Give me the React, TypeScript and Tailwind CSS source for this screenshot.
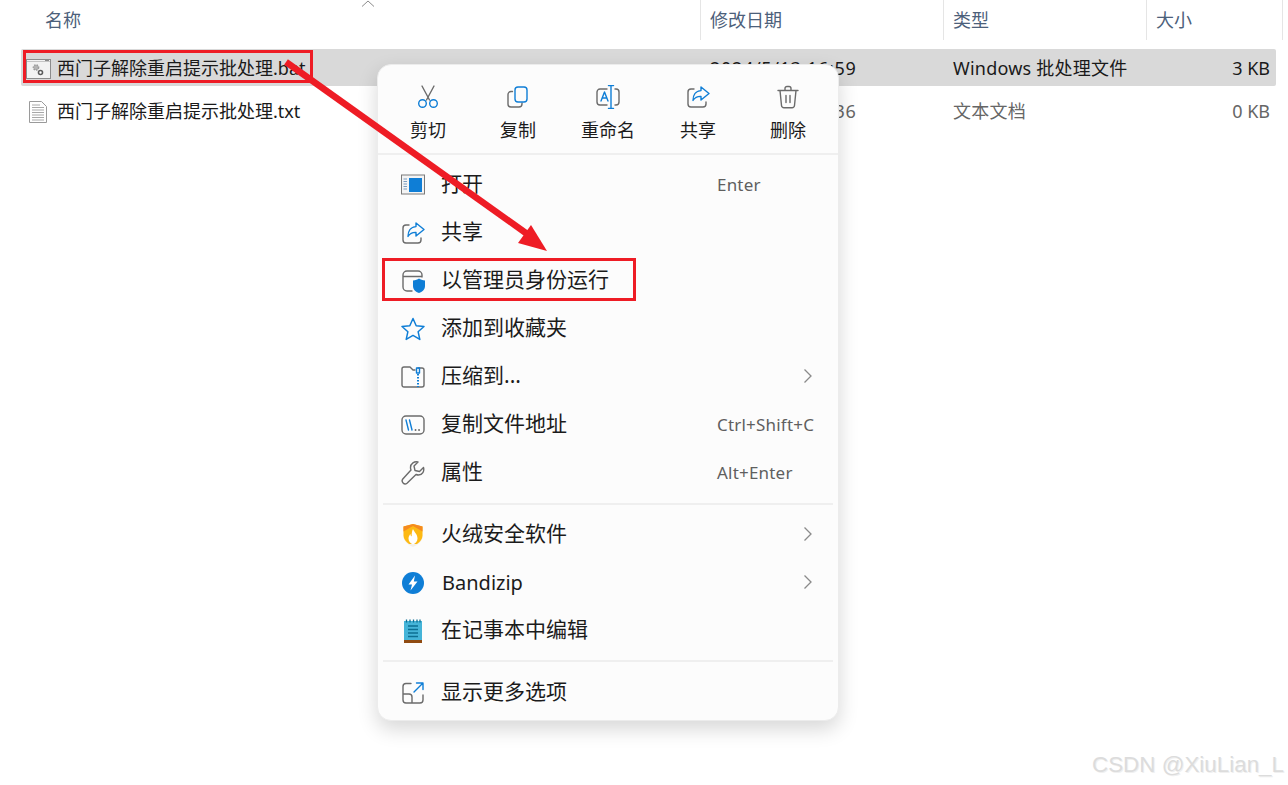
const font = { fontFamily: '"Noto Sans", "Noto Sans CJK SC", sans-serif' };

const GRAY = "#6b6b6b";
const BLUE = "#0f7ed6";

function Svg({ children, size = 24 }: { children: React.ReactNode; size?: number }) {
  return (
    <svg width={size} height={size} viewBox="0 0 24 24" fill="none" strokeWidth="1.4" strokeLinecap="round" strokeLinejoin="round">
      {children}
    </svg>
  );
}

const ScissorsIcon = () => (
  <Svg>
    <path d="M6 1l7.500 14M18 1l-7.500 14" stroke={GRAY} />
    <circle cx="6.500" cy="18.500" r="3.800" stroke={BLUE} />
    <circle cx="17.500" cy="18.500" r="3.800" stroke={BLUE} />
  </Svg>
);
const CopyIcon = () => (
  <Svg>
    <path d="M6.500 6.500H5a3 3 0 0 0-3 3V19a3 3 0 0 0 3 3h8a3 3 0 0 0 3-3v-1" stroke={GRAY} />
    <rect x="9" y="2" width="12" height="15" rx="3" stroke={BLUE} />
  </Svg>
);
const RenameIcon = () => (
  <Svg>
    <path d="M11 4H4a3 3 0 0 0-3 3v10a3 3 0 0 0 3 3h7M19 4h1a3 3 0 0 1 3 3v10a3 3 0 0 1-3 3h-1" stroke={GRAY} />
    <path d="M15 0.500v23M12.500 0.500h5M12.500 23.500h5M5 16l3.500-9L12 16M6.200 13h4.600" stroke={BLUE} />
  </Svg>
);
const ShareIcon = () => (
  <Svg>
    <path d="M8 4H5a3 3 0 0 0-3 3v12a3 3 0 0 0 3 3h12a3 3 0 0 0 3-3v-2" stroke={GRAY} />
    <path d="M15 2l8 6.500-8 6.500v-3.600c-3.500-.2-6 1-8 4 0-5 2.500-9.400 8-9.800z" stroke={BLUE} />
  </Svg>
);
const TrashIcon = () => (
  <Svg>
    <path d="M2 5.500h20M9 5V3.500A2 2 0 0 1 11 1.500h2a2 2 0 0 1 2 2V5M4 5.500l1.500 15a2.500 2.500 0 0 0 2.500 2.200h8a2.500 2.500 0 0 0 2.500-2.200L20 5.500M10 10.500v7M14 10.500v7" stroke={GRAY} />
  </Svg>
);
const OpenIcon = () => (
  <Svg>
    <rect x="0.500" y="2" width="23" height="19" fill="#f4f4f4" stroke="#7a7a7a" strokeWidth="1" strokeLinejoin="miter" />
    <rect x="8" y="5" width="13" height="14" fill={BLUE} stroke="none" />
    <path d="M2.500 6h3.500M2.500 8.500h3.500M2.500 11h3.500M2.500 13.500h3.500M2.500 16h3.500" stroke="#7a9cc0" strokeWidth="1" strokeLinecap="butt" />
  </Svg>
);
const AdminIcon = () => (
  <Svg>
    <path d="M11 22H6a4 4 0 0 1-4-4V6a4 4 0 0 1 4-4h11a4 4 0 0 1 4 4v2M2 7.500h19" stroke={GRAY} />
    <path d="M18 9.500c1.500 1.200 3.500 1.800 6 1.900v5.600c0 3.700-2.700 5.800-6 7-3.300-1.200-6-3.300-6-7v-5.600c2.500-.1 4.500-.7 6-1.900z" fill={BLUE} stroke="none" />
  </Svg>
);
const StarIcon = () => (
  <Svg>
    <path d="M12 1.500l3.200 7.200 7.800.8-5.900 5.200 1.700 7.700L12 18.400l-6.800 4 1.700-7.700L1 9.500l7.800-.8z" stroke={BLUE} strokeWidth="1.500" />
  </Svg>
);
const ZipIcon = () => (
  <Svg>
    <path d="M17 3h4a2 2 0 0 1 2 2v15a2 2 0 0 1-2 2H3a2 2 0 0 1-2-2V4a2 2 0 0 1 2-2h6l3 3h2" stroke={GRAY} />
    <path d="M17 9v13" stroke={BLUE} strokeWidth="2" strokeDasharray="1.500 1.500" strokeLinecap="butt" />
    <rect x="15.500" y="3" width="3" height="5" stroke={BLUE} strokeWidth="1.400" />
  </Svg>
);
const PathIcon = () => (
  <Svg>
    <rect x="1" y="3" width="22" height="18" rx="4" stroke={GRAY} />
    <path d="M5 7l2.500 10M8.500 7L11 17" stroke={BLUE} />
    <path d="M14.500 17h.1M18 17h.1" stroke={GRAY} strokeWidth="1.800" />
  </Svg>
);
const WrenchIcon = () => (
  <Svg>
    <path d="M22.500 6.500l-4 4-4.500-1-1-4.500 4-4c-3.500-1-7.500 1.500-7.500 5.500 0 1 .2 1.800.5 2.500L1.800 18a3 3 0 0 0 4.200 4.200L15 13.500c.8.300 1.500.5 2.500.5 4 0 6-4 5-7.500z" stroke={GRAY} />
  </Svg>
);
const HuorongIcon = () => (
  <Svg>
    <path d="M12 1l9.500 2.500v10c0 4.500-4 8-9.500 10.500C6.500 21.500 2.500 18 2.500 13.500v-10z" fill="#f4f0e8" />
    <path d="M12 1l9.500 2.500v9c0 3.500-2.500 6.500-5.500 8.500H8c-3-2-5.500-5-5.500-8.500v-9z" fill="#fdb913" />
    <path d="M12 1l9.500 2.500v5L12 3 2.500 8.500v-5z" fill="#f58a1f" />
    <path d="M12 6c1 3 4.500 5 4.500 9.500 0 3-2 5-4.500 6-2.500-1-4.500-3-4.500-6 0-2 1-3.500 2-4.500 0 1.500.5 2 1.200 2.500C10.500 10.500 11 8 12 6z" fill="#fff" />
  </Svg>
);
const BandizipIcon = () => (
  <Svg>
    <circle cx="12" cy="12" r="11" fill="#0f7ed6" />
    <path d="M14 4.500L7.500 13.500h3.500L9.500 19.500 16.500 10.500h-3.700z" fill="#fff" />
  </Svg>
);
const NotepadIcon = () => (
  <Svg>
    <rect x="3" y="2" width="18" height="20" fill="#45b4d8" />
    <rect x="3" y="21" width="18" height="3" fill="#8f4b12" />
    <path d="M5.500 0.500v3M9 0.500v3M12.500 0.500v3M16 0.500v3M19 0.500v3" stroke="#0d6f93" strokeWidth="1.300" strokeLinecap="butt" />
    <path d="M7 7h10M7 10.500h10M7 14h10M7 17.500h10" stroke="#0d6f93" strokeWidth="1.500" strokeLinecap="butt" />
  </Svg>
);
const MoreIcon = () => (
  <Svg>
    <path d="M10 2.500H5a3 3 0 0 0-3 3V19a3 3 0 0 0 3 3h14a3 3 0 0 0 3-3v-5M2 13h6a3 3 0 0 1 3 3v6" stroke={GRAY} />
    <path d="M13 11l9-9M15.500 2H22v6.500" stroke={BLUE} />
  </Svg>
);
const Chevron = () => (
  <svg width="10" height="16" viewBox="0 0 10 16" fill="none" stroke="#8a8a8a" strokeWidth="1.300">
    <path d="M1.500 1.500L8 8l-6.500 6.500" />
  </svg>
);

const BatIcon = () => (
  <svg width="25" height="20" viewBox="0 0 25 20" fill="none">
    <rect x="0.500" y="0.500" width="24" height="19" fill="#f2f2f2" stroke="#8c8c8c" />
    <path d="M1 2.500h23" stroke="#c4c4c4" />
    <path d="M19 1.500h4" stroke="#8a8a8a" />
    <circle cx="10" cy="8.500" r="2.600" fill="#b4b4b4" stroke="#9a9a9a" strokeWidth="1.500" strokeDasharray="1.500 1" />
    <circle cx="14.500" cy="13.500" r="2" fill="#fff" stroke="#5c5c5c" strokeWidth="1.600" />
  </svg>
);
const TxtIcon = () => (
  <svg width="18" height="22" viewBox="0 0 18 22" fill="none">
    <path d="M0.500 0.500h12l5 5v16H0.500z" fill="#fff" stroke="#9a9a9a" />
    <path d="M3 4h8M3 6.500h12M3 9h12M3 11.500h12M3 14h12M3 16.500h12M3 19h12" stroke="#a8a8a8" />
  </svg>
);

const actions = [
  { label: "剪切", icon: <ScissorsIcon /> },
  { label: "复制", icon: <CopyIcon /> },
  { label: "重命名", icon: <RenameIcon /> },
  { label: "共享", icon: <ShareIcon /> },
  { label: "删除", icon: <TrashIcon /> },
];

function MenuRow({ icon, label, hint, arrow, latin }: { icon: React.ReactNode; label: string; hint?: string; arrow?: boolean; latin?: boolean }) {
  return (
    <div className="flex h-12 items-center pl-[18px]">
      <span className="flex w-6 justify-center">{icon}</span>
      <span className={`ml-[16px] leading-none text-[#1b1b1b] ${latin ? "ml-[17px] text-[20px]" : "pb-[3px] text-[21px]"}`}>{label}</span>
      {hint && <span className="ml-auto w-[116px] text-[17px] tracking-[0.2px] text-[#5f5f5f]">{hint}</span>}
      {arrow && (
        <span className="ml-auto mr-5 -translate-y-px">
          <Chevron />
        </span>
      )}
    </div>
  );
}

function Divider() {
  return <div className="h-[2px] bg-[#efefef]" />;
}

function FileRow({ icon, name, date, type, size, selected }: { icon: React.ReactNode; name: string; date: string; type: string; size: string; selected?: boolean }) {
  const muted = selected ? "text-[#1a1a1a]" : "text-[#666]";
  return (
    <div className={`ml-[21px] mr-3 grid h-[37px] grid-cols-[679px_243px_203px_130px] items-center rounded-[2px] pt-0.5 text-[18px] ${selected ? "bg-[#d9d9d9]" : ""}`}>
      <div className="flex items-center text-[#1a1a1a]">
        <span className="flex w-9 justify-center pl-0.5 pr-1">{icon}</span>
        <span>{name}</span>
      </div>
      <div className={`pl-2.5 tracking-[0.68px] ${muted}`}>{date}</div>
      <div className={`pl-2.5 tracking-[0.22px] ${muted}`}>{type}</div>
      <div className={`pr-1.5 text-right ${muted}`}>{size}</div>
    </div>
  );
}

export default function App() {
  return (
    <div className="relative h-[785px] w-[1288px] overflow-hidden bg-white" style={font}>
      {/* Column headers */}
      <div className="grid h-10 grid-cols-[700px_243px_203px_137px] text-[18px] text-[#4c607a]">
        <div className="relative pl-[45px] pt-[7px]">
          名称
          <svg className="absolute left-[361px] top-0" width="14" height="8" viewBox="0 0 14 8" fill="none" stroke="#8c8c8c">
            <path d="M1 6.500L7 1l6 5.500" />
          </svg>
        </div>
        <div className="border-l border-[#e5e5e5] pl-[9px] pt-[7px]">修改日期</div>
        <div className="border-l border-[#e5e5e5] pl-[9px] pt-[7px]">类型</div>
        <div className="border-x border-[#e5e5e5] pl-[9px] pt-[7px]">大小</div>
      </div>

      {/* File list */}
      <div className="mt-[9px] flex flex-col gap-[6px]">
        <FileRow selected icon={<BatIcon />} name="西门子解除重启提示批处理.bat" date="2024/5/13 16:59" type="Windows 批处理文件" size="3 KB" />
        <FileRow icon={<TxtIcon />} name="西门子解除重启提示批处理.txt" date="2024/5/13 16:36" type="文本文档" size="0 KB" />
      </div>

      {/* Context menu */}
      <div className="absolute left-[377px] top-[64px] w-[462px] rounded-[14px] border border-[#ececec] bg-[#fcfcfc] shadow-[0_8px_20px_rgba(0,0,0,0.16)]">
        <div className="flex h-[88px] items-start px-[5px] pt-5">
          {actions.map((a) => (
            <div key={a.label} className="flex w-[90px] flex-col items-center">
              <span className="h-6">{a.icon}</span>
              <span className="mt-2.5 text-[18px] leading-[22px] text-[#1b1b1b]">{a.label}</span>
            </div>
          ))}
        </div>
        <Divider />
        <div className="px-[5px] pt-[6px]">
          <MenuRow icon={<OpenIcon />} label="打开" hint="Enter" />
          <MenuRow icon={<ShareIcon />} label="共享" />
          <MenuRow icon={<AdminIcon />} label="以管理员身份运行" />
          <MenuRow icon={<StarIcon />} label="添加到收藏夹" />
          <MenuRow icon={<ZipIcon />} label="压缩到..." arrow />
          <MenuRow icon={<PathIcon />} label="复制文件地址" hint="Ctrl+Shift+C" />
          <MenuRow icon={<WrenchIcon />} label="属性" hint="Alt+Enter" />
          <div className="mt-1.5"><Divider /></div>
          <div className="mt-1.5">
            <MenuRow icon={<HuorongIcon />} label="火绒安全软件" arrow />
            <MenuRow icon={<BandizipIcon />} label="Bandizip" arrow latin />
            <MenuRow icon={<NotepadIcon />} label="在记事本中编辑" />
          </div>
          <div className="mt-[5px]"><Divider /></div>
          <div className="mt-[7px] pb-[3px]">
            <MenuRow icon={<MoreIcon />} label="显示更多选项" />
          </div>
        </div>
      </div>

      {/* Red annotations */}
      <div className="absolute left-[23px] top-[50px] h-[33px] w-[290px] border-[3px] border-[#ee1c25]" />
      <div className="absolute left-[382px] top-[258px] h-[43px] w-[254px] border-[3px] border-[#ee1c25]" />
      <svg className="absolute left-0 top-0" width="1288" height="785" fill="none">
        <path d="M286 62L530 236" stroke="#ee1c25" strokeWidth="6.500" />
        <path d="M547 251L531 225L518 243Z" fill="#ee1c25" />
      </svg>

      {/* Watermark */}
      <div className="absolute left-[1092px] top-[748px] whitespace-nowrap text-[22.4px] text-[#dcdcdc] [font-family:'Liberation_Sans',sans-serif] [text-shadow:1px_1px_0_#f0f0f0]">
        CSDN @XiuLian_L
      </div>
    </div>
  );
}
